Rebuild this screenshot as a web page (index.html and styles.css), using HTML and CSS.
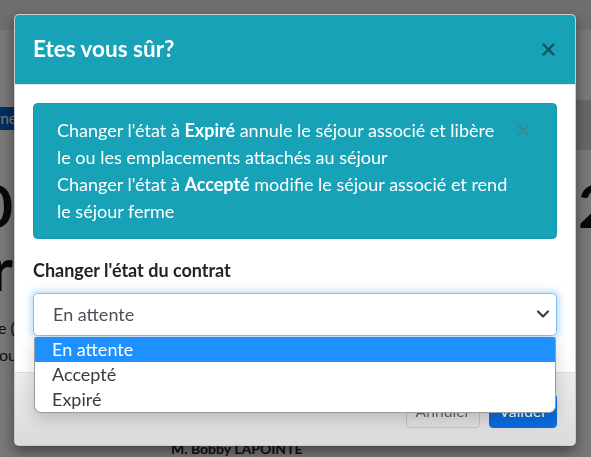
FILE: index.html
```html
<!DOCTYPE html>
<html lang="fr">
<head>
  <meta charset="UTF-8" />
  <meta name="viewport" content="width=device-width, initial-scale=1.0" />
  <title>Contrat de séjour</title>
  <link rel="stylesheet" href="styles.css">
</head>
<body>
  <div class="page">
    <div class="navbar"></div>
    <div class="toolbar">
      <span class="btn-back">Retourner</span>
      <span class="toolbar-box"></span>
    </div>
    <div class="headline headline-first">
      <span class="edge-left">10</span>
      <span class="edge-right">2020</span>
    </div>
    <div class="headline">
      <span class="edge-left">Séjour</span>
    </div>
    <p class="note note-first">Durée (semaines)</p>
    <p class="note note-second">ou plus</p>
    <p class="client">M. Bobby LAPOINTE</p>
  </div>

  <div class="modal">
    <div class="modal-dialog">
      <div class="modal-header">
        <h5 class="modal-title">Etes vous sûr?</h5>
        <span class="close-x" title="Fermer">
          <svg width="13" height="13" viewBox="0 0 13 13"><path d="M1.5 1.5l10 10M11.5 1.5l-10 10" stroke="currentColor" stroke-width="2.4" stroke-linecap="round"/></svg>
        </span>
      </div>
      <div class="modal-body">
        <div class="alert">
          <span class="alert-close">
            <svg width="13" height="13" viewBox="0 0 13 13"><path d="M1.5 1.5l10 10M11.5 1.5l-10 10" stroke="currentColor" stroke-width="1.8" stroke-linecap="round"/></svg>
          </span>
          Changer l'état à <b>Expiré</b> annule le séjour associé et libère le ou les emplacements attachés au séjour<br>
          Changer l'état à <b>Accepté</b> modifie le séjour associé et rend le séjour ferme
        </div>
        <div class="form-group">
          <label class="form-label">Changer l'état du contrat</label>
          <div class="select-wrap">
            <div class="select">
              <span>En attente</span>
              <svg width="16" height="12" viewBox="0 0 16 12"><path d="M3 3.5l5 5 5-5" fill="none" stroke="#3a3f44" stroke-width="2.2" stroke-linecap="round" stroke-linejoin="round"/></svg>
            </div>
            <ul class="select-list">
              <li class="selected">En attente</li>
              <li>Accepté</li>
              <li>Expiré</li>
            </ul>
          </div>
        </div>
      </div>
      <div class="modal-footer">
        <button class="btn btn-cancel">Annuler</button>
        <button class="btn btn-ok">Valider</button>
      </div>
    </div>
  </div>
</body>
</html>
```

FILE: styles.css
```css
body {
  margin: 0;
  font-family: Lato, "Segoe UI", sans-serif;
  background-color: #fbfbfb;
  color: #212529;
  height: 457px;
  overflow: hidden;
}
.navbar {
  height: 30px;
  background-color: #e6e6e6;
}
.toolbar {
  display: flex;
  justify-content: space-between;
  align-items: flex-start;
  margin-top: 70px;
  height: 50px;
}
.btn-back {
  margin-top: 7px;
  margin-left: -52px;
  padding: 0 8px;
  background-color: #0062cc;
  color: #fff;
  font-size: 15px;
  line-height: 23px;
  border-radius: 3px;
}
.toolbar-box {
  width: 40px;
  height: 50px;
  background-color: #d8d8d8;
}
.headline {
  display: flex;
  font-size: 60px;
  font-weight: 700;
  line-height: 63px;
  color: #111;
  white-space: nowrap;
}
.headline-first {
  margin-top: 24px;
}
.edge-left {
  width: 200px;
  margin-left: -187px;
  text-align: right;
}
.edge-right {
  width: 200px;
  margin-left: auto;
  margin-right: -187px;
}
.note {
  margin: 0;
  font-size: 16px;
  line-height: 27px;
  white-space: nowrap;
}
.note-first {
  margin-top: 14px;
  margin-left: -37px;
}
.note-second {
  margin-left: -1px;
}
.client {
  margin: 69px 0 0 171px;
  font-size: 14px;
  font-weight: 700;
  line-height: 24px;
}

/* modal over the page */
.modal {
  position: fixed;
  top: 0;
  left: 0;
  right: 0;
  bottom: 0;
  background-color: rgba(0, 0, 0, 0.52);
  padding: 14px 14px 0;
}
.modal-dialog {
  box-sizing: border-box;
  width: 562px;
  background-color: #fff;
  border: 1px solid rgba(0, 0, 0, 0.2);
  border-radius: 5px;
  box-shadow: 0 6px 14px rgba(0, 0, 0, 0.45);
}
.modal-header {
  display: flex;
  align-items: center;
  justify-content: space-between;
  height: 34px;
  padding: 17px 18px 18px;
  background-color: #17a2b8;
  border-bottom: 1px solid #dee2e6;
  border-radius: 4px 4px 0 0;
}
.modal-title {
  margin: 0;
  font-size: 22.5px;
  font-weight: 700;
  line-height: 34px;
  color: #fff;
}
.close-x {
  display: flex;
  margin-right: 2px;
  color: #0d5562;
}
.modal-body {
  padding: 18px;
}
.alert {
  padding: 13px 36px 13px 23px;
  margin-bottom: 18px;
  background-color: #17a2b8;
  border: 1px solid #1598ad;
  border-radius: 4.5px;
  color: #fff;
  font-size: 18px;
  line-height: 27px;
}
.alert b {
  font-weight: 700;
}
.alert-close {
  float: right;
  display: flex;
  align-items: center;
  height: 27px;
  margin: 0 -10px 0 8px;
  color: #388a98;
}
.form-label {
  display: block;
  margin-bottom: 9px;
  font-size: 18px;
  font-weight: 700;
  line-height: 27px;
}
.form-group {
  margin-bottom: 18px;
}
.select-wrap {
  position: relative;
}
.select {
  box-sizing: border-box;
  display: flex;
  align-items: center;
  justify-content: space-between;
  height: 42.5px;
  padding: 0 5px 0 19px;
  border: 1px solid #80bdff;
  border-radius: 4.5px;
  box-shadow: 0 0 7px 2px rgba(110, 180, 240, 0.5);
  font-size: 18px;
  color: #495057;
}
.select-list {
  position: absolute;
  top: 100%;
  left: 1px;
  right: 1px;
  margin: 1.5px 0 0;
  padding: 0;
  list-style: none;
  background-color: #fff;
  border: 1px solid #9c9c9c;
  border-top: none;
  border-radius: 2px 2px 7px 7px;
  box-shadow: 0 6px 16px rgba(0, 0, 0, 0.18);
  overflow: hidden;
  z-index: 2;
}
.select-list li {
  padding-left: 17px;
  font-size: 18px;
  line-height: 25px;
  color: #3b3b3b;
}
.select-list li.selected {
  background-color: #1e90ff;
  color: #fff;
}
.modal-footer {
  display: flex;
  justify-content: flex-end;
  gap: 9px;
  padding: 21px 18px 17px;
  border-top: 1px solid #d9d9d9;
  background: linear-gradient(#ececec, #dbdbdb);
  border-radius: 0 0 4px 4px;
}
.btn {
  height: 34px;
  padding: 0 9px;
  font-family: Lato, "Segoe UI", sans-serif;
  font-size: 15.75px;
  border-radius: 4px;
}
.btn-cancel {
  background: transparent;
  border: 1px solid #c2c2c2;
  color: #5f666c;
}
.btn-ok {
  background-color: #0b6cdc;
  border: 1px solid #0b6cdc;
  color: #fff;
}
```
